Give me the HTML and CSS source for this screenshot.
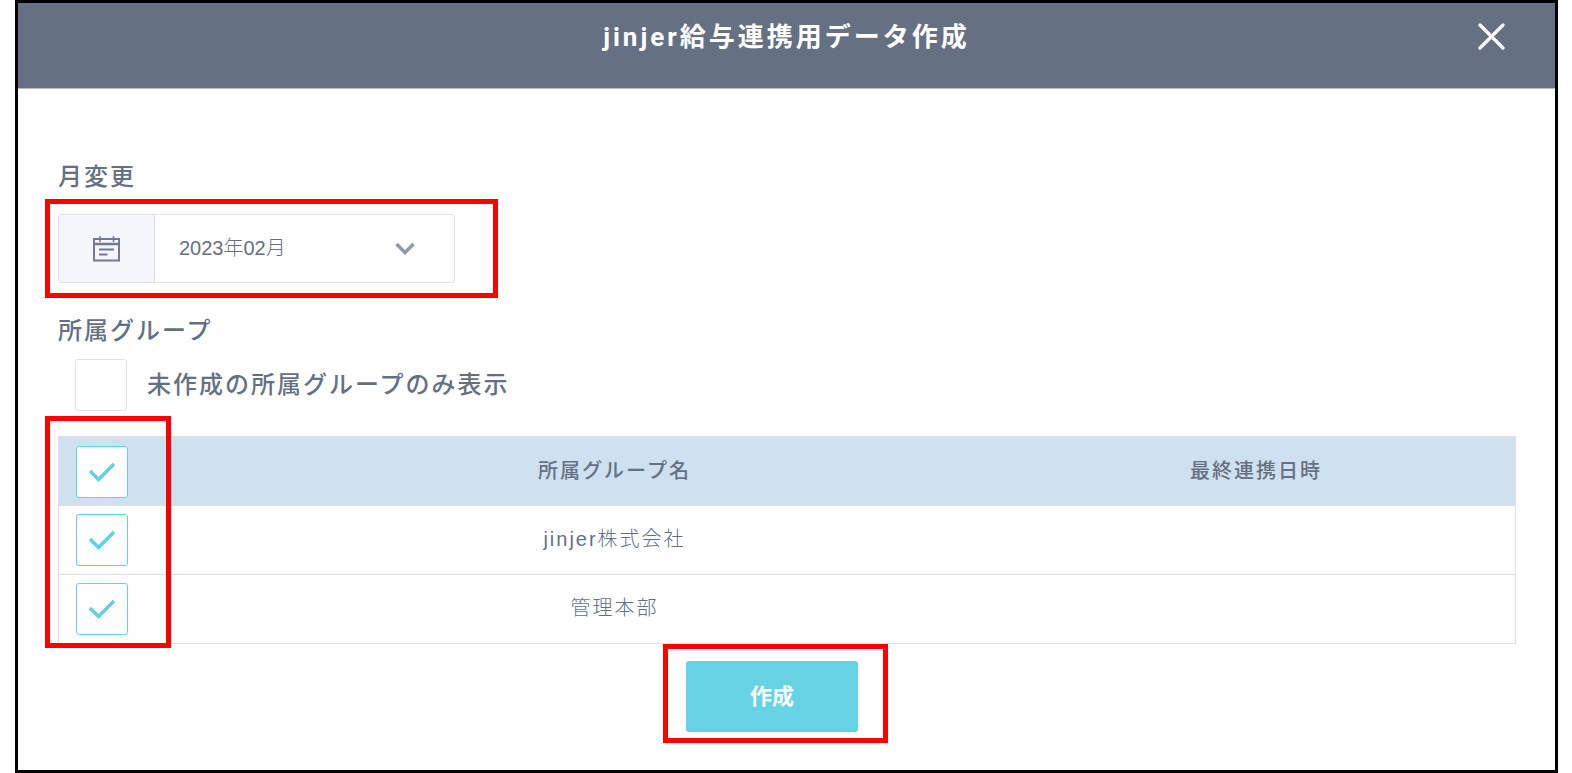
FILE: index.html
```html
<!DOCTYPE html>
<html lang="ja">
<head>
    <meta charset="UTF-8">
    <meta name="viewport" content="width=device-width, initial-scale=1.0">
    <title>jinjer給与連携用データ作成</title>
    <link rel="stylesheet" href="styles.css">
</head>
<body>
    <div class="modal">
        <header class="modal-header">
            <h1 class="modal-title">jinjer給与連携用データ作成</h1>
            <button type="button" class="close-button" aria-label="閉じる">
                <svg width="28" height="28" viewBox="0 0 28 28" fill="none" stroke="#fff" stroke-width="3.200" stroke-linecap="round"><path d="M2 2L25 25M25 2L2 25"/></svg>
            </button>
        </header>

        <main class="modal-body">
            <label class="section-label" for="month">月変更</label>
            <div class="month-picker marked">
                <span class="month-icon">
                    <svg width="28" height="26" viewBox="0 0 28 26" fill="none" stroke="#717a91" stroke-width="2">
                        <rect x="1" y="3" width="25" height="21.500"/>
                        <path d="M1 8H26" stroke-width="2.500"/>
                        <path d="M7 0V6M20.500 0V6" stroke-width="1.500"/>
                        <path d="M6 13.500H21M6 18.500H14.500"/>
                    </svg>
                </span>
                <select id="month" class="month-select">
                    <option>2023年02月</option>
                </select>
                <svg class="month-arrow" width="20" height="14" viewBox="0 0 20 14" fill="none" stroke="#9299ad" stroke-width="3.500"><path d="M1.500 2L10 10.500L18.500 2"/></svg>
            </div>

            <h2 class="section-label group-label">所属グループ</h2>
            <div class="filter-row">
                <input type="checkbox" id="uncreated" class="check-input">
                <label class="filter-label" for="uncreated">未作成の所属グループのみ表示</label>
            </div>

            <div class="group-list">
                <table class="group-table">
                    <colgroup>
                        <col class="col-check">
                        <col>
                        <col class="col-date">
                    </colgroup>
                    <thead>
                        <tr>
                            <th><span class="check">
                                <input type="checkbox" class="check-input" aria-label="すべて選択" checked>
                                <svg class="check-mark" width="28" height="22" viewBox="0 0 28 22"><path d="M2 10L10.500 18.500L26 3"/></svg>
                            </span></th>
                            <th>所属グループ名</th>
                            <th>最終連携日時</th>
                        </tr>
                    </thead>
                    <tbody>
                        <tr>
                            <td><span class="check">
                                <input type="checkbox" class="check-input" aria-label="jinjer株式会社" checked>
                                <svg class="check-mark" width="28" height="22" viewBox="0 0 28 22"><path d="M2 10L10.500 18.500L26 3"/></svg>
                            </span></td>
                            <td>jinjer株式会社</td>
                            <td></td>
                        </tr>
                        <tr>
                            <td><span class="check">
                                <input type="checkbox" class="check-input" aria-label="管理本部" checked>
                                <svg class="check-mark" width="28" height="22" viewBox="0 0 28 22"><path d="M2 10L10.500 18.500L26 3"/></svg>
                            </span></td>
                            <td>管理本部</td>
                            <td></td>
                        </tr>
                    </tbody>
                </table>
                <div class="list-mark"></div>
            </div>

            <div class="actions">
                <div class="action marked">
                    <button type="button" class="create-button">作成</button>
                </div>
            </div>
        </main>
    </div>
</body>
</html>
```
FILE: styles.css
```css
* {
    box-sizing: border-box;
}

body {
    margin: 0;
    background-color: #fff;
    color: #667083;
    font-family: "Liberation Sans", "Noto Sans CJK JP", sans-serif;
}

.modal {
    min-height: 100vh;
    margin: 0 14px 0 15px;
    border: 3px solid #000;
}

.modal-header {
    display: grid;
    grid-template-columns: 1fr auto 1fr;
    align-items: center;
    padding: 14px 49px 31px;
    background-color: #667083;
    border-bottom: 1px solid #b4b9c4;
}

.modal-title {
    grid-column: 2;
    margin: 0;
    color: #fff;
    font-family: Roboto, "Noto Sans CJK JP", sans-serif;
    font-size: 26px;
    line-height: 40px;
    letter-spacing: 3px;
}

.close-button {
    justify-self: end;
    display: flex;
    padding: 0;
    border: none;
    background: none;
    cursor: pointer;
}

.modal-body {
    padding: 70px 39px 20px 40px;
}

.section-label {
    display: block;
    margin: 0;
    font-size: 24px;
    font-weight: 500;
    line-height: 36px;
    letter-spacing: 2px;
}

/* red frames */
.marked {
    position: relative;
}

.marked::after,
.list-mark {
    content: "";
    position: absolute;
    border: 5px solid #f00;
    pointer-events: none;
}

/* month picker */
.month-picker {
    display: grid;
    grid-template-columns: 96px 1fr;
    width: 397px;
    height: 69px;
    margin-top: 19px;
    border: 1px solid #dfe2e6;
    border-radius: 3px;
}

.month-picker::after {
    inset: -16px -44px -16px -14px;
}

.month-icon {
    display: flex;
    align-items: center;
    justify-content: center;
    background-color: #f5f6fb;
    border-right: 1px solid #dfe2e6;
}

.month-select {
    grid-area: 1 / 2;
    appearance: none;
    padding: 0 24px 2px;
    border: none;
    background: none;
    color: inherit;
    font-family: inherit;
    font-size: 20px;
    font-weight: 300;
}

.month-arrow {
    grid-area: 1 / 2;
    align-self: center;
    justify-self: end;
    margin-right: 39px;
    pointer-events: none;
}

/* checkboxes */
.check-input {
    appearance: none;
    width: 52px;
    height: 52px;
    margin: 0;
    border: 1px solid #dfe2e6;
    border-radius: 3px;
    background-color: #fff;
}

.check-input:checked {
    border-color: #66d3e4;
}

.check {
    display: inline-grid;
    place-items: center;
    vertical-align: middle;
}

.check > * {
    grid-area: 1 / 1;
}

.check-mark {
    fill: none;
    stroke: #5fd1e3;
    stroke-width: 3.5;
    pointer-events: none;
}

.check-input:not(:checked) + .check-mark {
    display: none;
}

.group-label {
    margin-top: 30px;
}

.filter-row {
    display: flex;
    align-items: center;
    gap: 20px;
    margin-top: 10px;
    padding-left: 17px;
}

.filter-label {
    font-size: 24px;
    font-weight: 500;
    line-height: 36px;
    letter-spacing: 2px;
}

/* group table */
.group-list {
    position: relative;
    margin-top: 25px;
}

.list-mark {
    top: -20px;
    bottom: -4px;
    left: -13px;
    width: 126px;
}

.group-table {
    width: 100%;
    table-layout: fixed;
    border-collapse: separate;
    border-spacing: 0;
    border: 1px solid #dfdfdf;
    border-top-width: 2px;
    border-bottom: none;
    font-size: 20px;
    letter-spacing: 2px;
}

.col-check {
    width: 173px;
}

.col-date {
    width: 518px;
}

.group-table th,
.group-table td {
    height: 69px;
    padding: 0 0 5px;
    border-bottom: 1px solid #dfdfdf;
    text-align: center;
    font-weight: 300;
}

.group-table th {
    height: 68px;
    background-color: #cfe0f0;
    font-weight: 500;
}

.group-table th:first-child,
.group-table td:first-child {
    padding: 0 0 0 17px;
    text-align: left;
}

.actions {
    display: flex;
    justify-content: center;
    margin-top: 17px;
    padding-right: 30px;
}

.action::after {
    inset: -17px -30px -11px -23px;
}

.create-button {
    display: block;
    width: 172px;
    height: 71px;
    padding-bottom: 7px;
    border: none;
    border-radius: 3px;
    background-color: #66d3e4;
    color: #fff;
    font-family: inherit;
    font-size: 22px;
    font-weight: 700;
    cursor: pointer;
}
```
